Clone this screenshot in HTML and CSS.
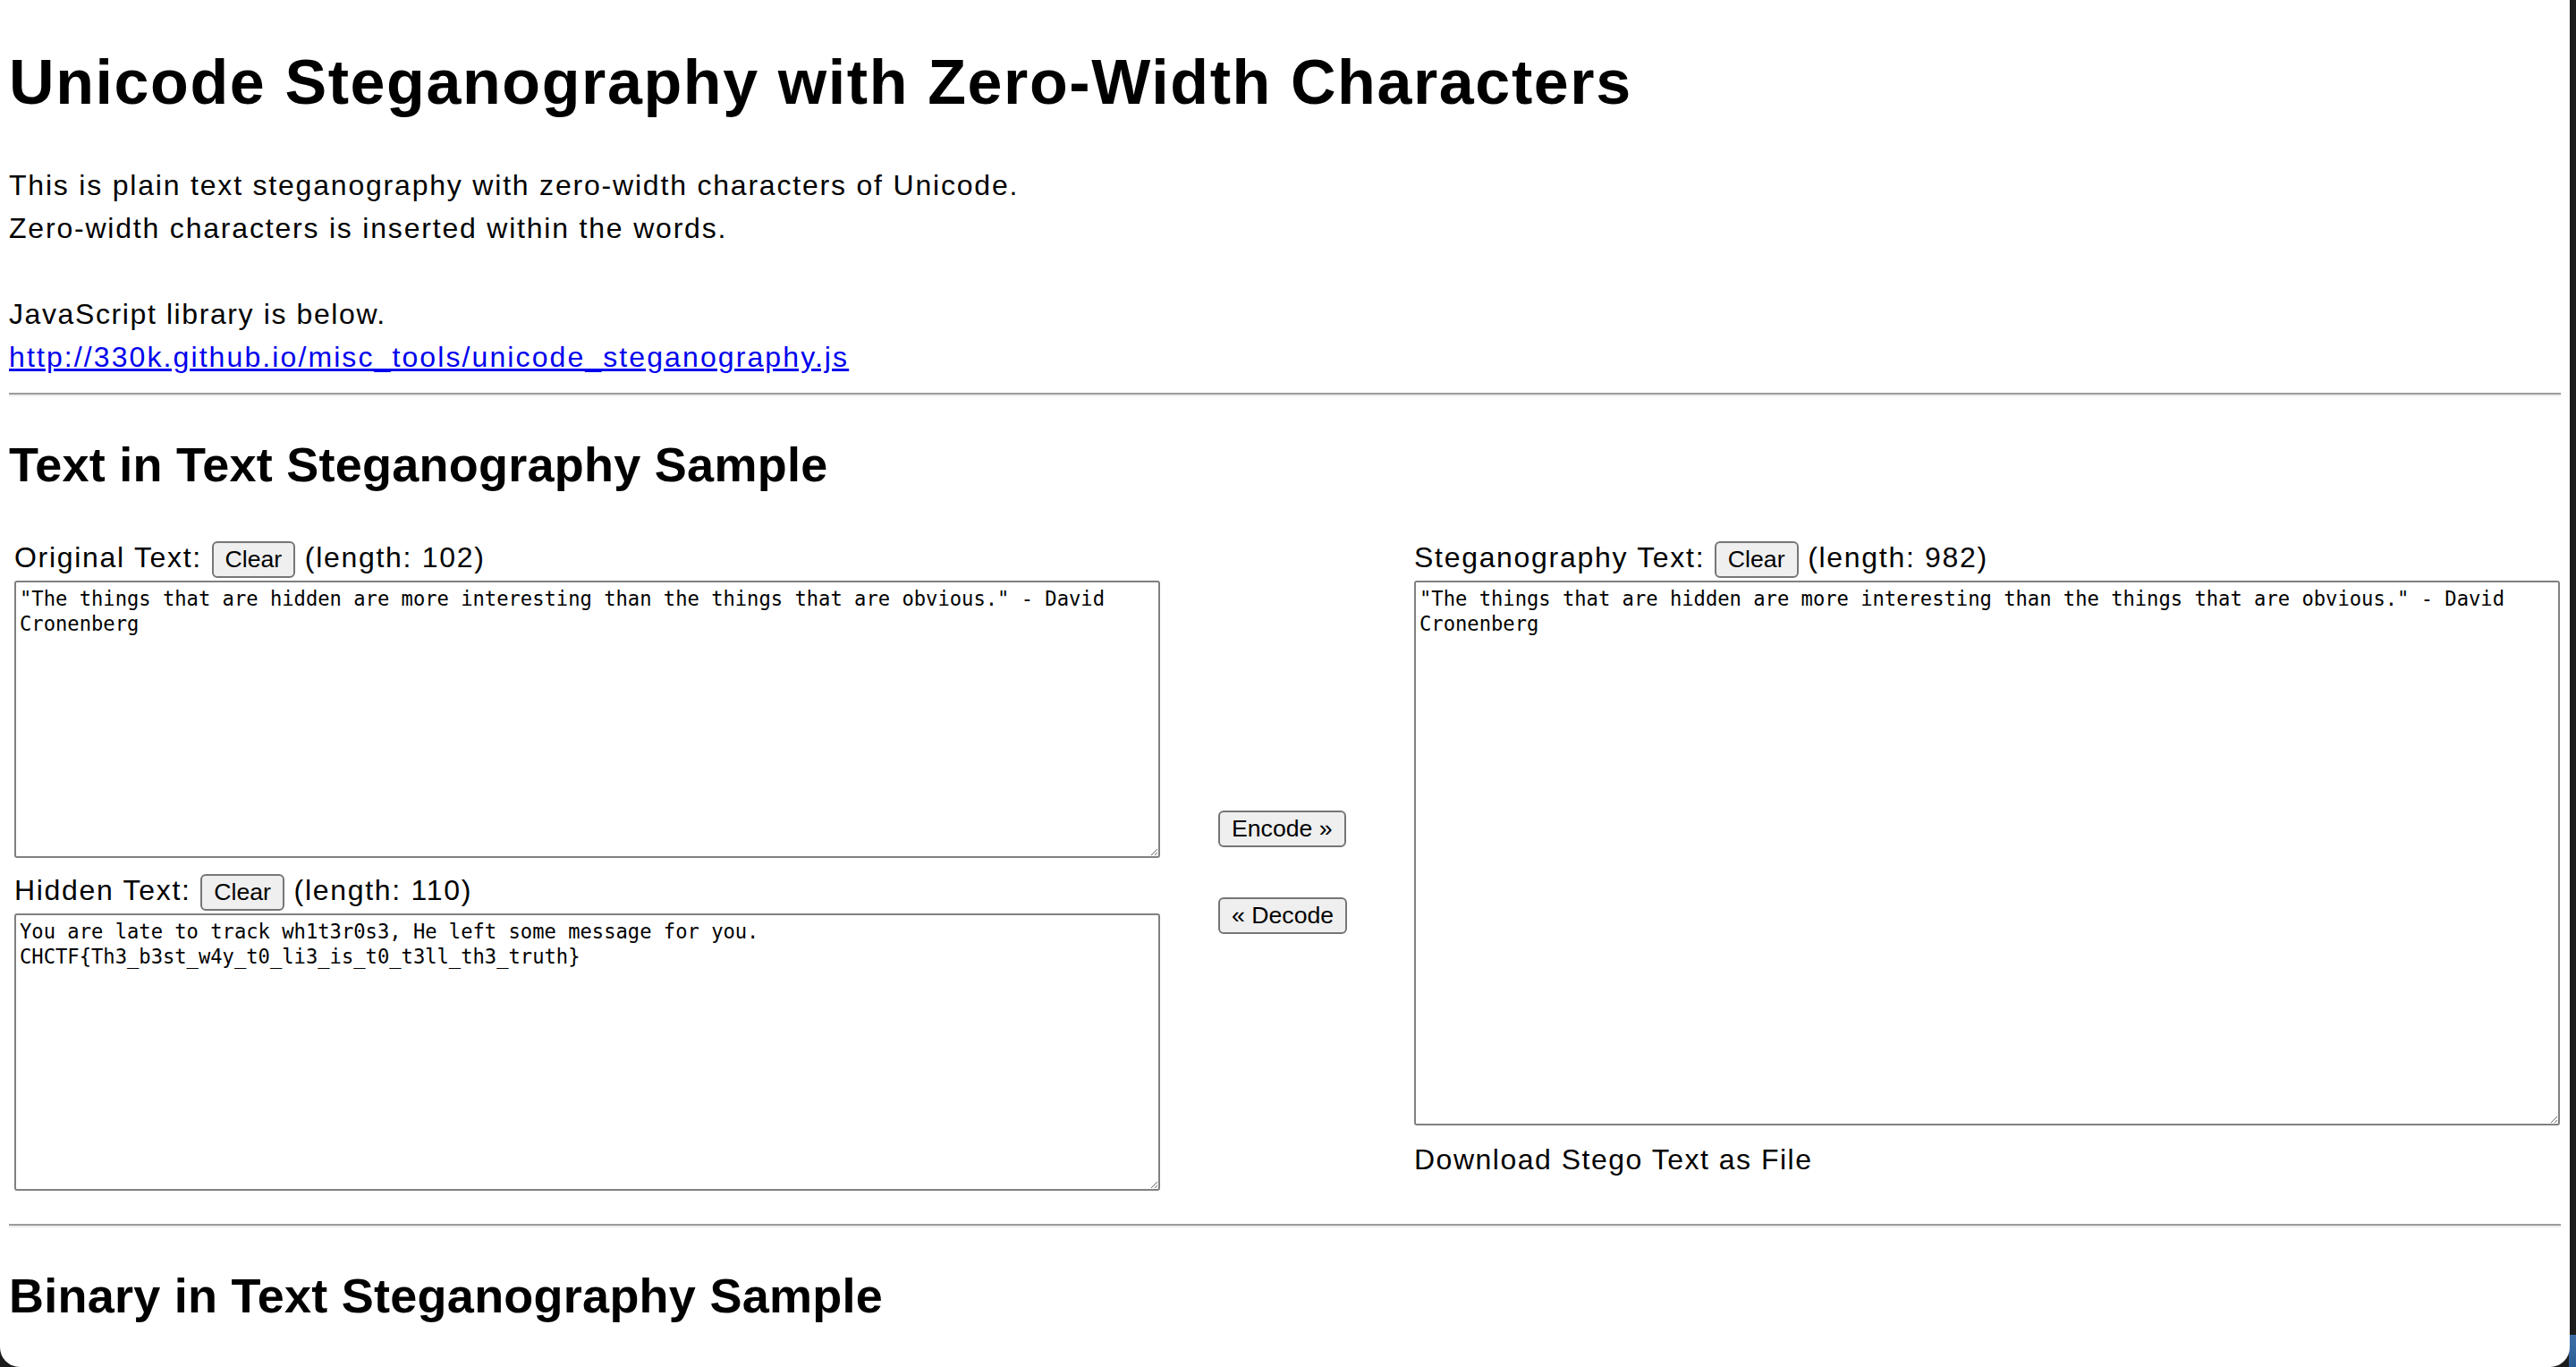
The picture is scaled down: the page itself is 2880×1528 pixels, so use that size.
FILE: index.html
```html
<!DOCTYPE html>
<html lang="en">
<head>
<meta charset="utf-8">
<title>Unicode Steganography with Zero-Width Characters</title>
<link rel="stylesheet" href="styles.css">
</head>
<body>
<div class="window">
  <h1 class="title">Unicode Steganography with Zero-Width Characters</h1>
  <div class="intro">This is plain text steganography with zero-width characters of Unicode.<br>Zero-width characters is inserted within the words.<br><br><span class="intro-short">JavaScript library is below.</span><br><a class="lib-link" href="http://330k.github.io/misc_tools/unicode_steganography.js">http://330k.github.io/misc_tools/unicode_steganography.js</a></div>
  <hr class="rule">
  <h2 class="section-title">Text in Text Steganography Sample</h2>
  <div class="stego">
    <div class="col">
      <div class="label">Original Text: <button class="btn">Clear</button> (length: 102)</div>
      <textarea class="ta ta-small">"The things that are hidden are more interesting than the things that are obvious." - David Cronenberg</textarea>
      <div class="label label-second">Hidden Text: <button class="btn">Clear</button> (length: 110)</div>
      <textarea class="ta ta-small">You are late to track wh1t3r0s3, He left some message for you.
CHCTF{Th3_b3st_w4y_t0_li3_is_t0_t3ll_th3_truth}</textarea>
    </div>
    <div class="mid">
      <button class="btn">Encode »</button>
      <button class="btn">« Decode</button>
    </div>
    <div class="col">
      <div class="label">Steganography Text: <button class="btn">Clear</button> (length: 982)</div>
      <textarea class="ta ta-big">"The things that are hidden are more interesting than the things that are obvious." - David Cronenberg</textarea>
      <div class="download">Download Stego Text as File</div>
    </div>
  </div>
  <hr class="rule">
  <h2 class="section-title">Binary in Text Steganography Sample</h2>
</div>
</body>
</html>
```
FILE: styles.css
```css
html, body {
  margin: 0;
  padding: 0;
}
body {
  width: 2880px;
  height: 1528px;
  overflow: hidden;
  background: linear-gradient(#3d6ea8, #2d5d97) right bottom / 8px 36px no-repeat, #1c1c1c;
  font-family: "Liberation Sans", Arial, sans-serif;
  color: #000;
}
.window {
  width: 2873px;
  height: 1528px;
  box-sizing: border-box;
  padding: 1px 10px 0 10px;
  background: #fff;
  border-bottom-left-radius: 22px;
  border-bottom-right-radius: 22px;
  overflow: hidden;
}
.title {
  margin: 43px 0 43px;
  font-size: 70px;
  line-height: 96px;
  font-weight: bold;
  letter-spacing: 1.6px;
  white-space: nowrap;
}
.intro {
  font-size: 32px;
  line-height: 48px;
  letter-spacing: 1.8px;
}
.intro-short {
  letter-spacing: 1.6px;
}
.lib-link {
  color: #0000ee;
  text-decoration: underline;
  letter-spacing: 2.1px;
}
.rule {
  margin: 16px 0;
  height: 0;
  border: 0;
  border-top: 2px solid #9c9c9c;
  border-bottom: 2px solid #ececec;
}
.section-title {
  margin: 40px 0 44px;
  font-size: 54px;
  line-height: 72px;
  font-weight: bold;
  letter-spacing: 0.25px;
  white-space: nowrap;
}
.stego {
  display: grid;
  grid-template-columns: 1281px 284px 1281px;
  margin: 0 0 37px 6px;
}
.col {
  display: flex;
  flex-direction: column;
  align-items: flex-start;
}
.label {
  height: 48px;
  font-size: 32px;
  line-height: 48px;
  letter-spacing: 1.7px;
  white-space: nowrap;
}
.label-second {
  margin-top: 12px;
}
.btn {
  font-family: "Liberation Sans", Arial, sans-serif;
  font-size: 26.67px;
  line-height: 31px;
  letter-spacing: 0;
  padding: 3px 13px;
  border: 2px solid #767676;
  border-radius: 6px;
  background: #efefef;
  color: #000;
  margin: 0;
  vertical-align: baseline;
}
.ta {
  display: block;
  box-sizing: border-box;
  width: 1281px;
  margin: 2px 0 0 0;
  padding: 5px 4px 4px;
  border: 2px solid #808080;
  border-radius: 3px;
  font-family: "DejaVu Sans Mono", "Liberation Mono", monospace;
  font-size: 22.15px;
  line-height: 27.5px;
  color: #000;
  background: #fff;
}
.ta-small {
  height: 310px;
}
.ta-big {
  height: 609px;
}
.download {
  margin-top: 14px;
  font-size: 32px;
  line-height: 48px;
  letter-spacing: 1.5px;
}
.mid {
  align-self: center;
  display: flex;
  flex-direction: column;
  align-items: flex-start;
  gap: 56px;
  padding: 20px 0 0 65px;
}
```
